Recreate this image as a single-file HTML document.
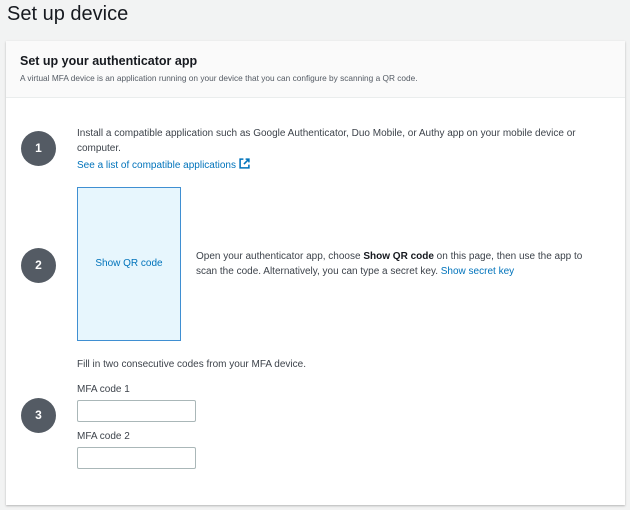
<!DOCTYPE html>
<html><head><meta charset="utf-8"><style>
*{margin:0;padding:0;box-sizing:border-box}
body{width:630px;height:510px;background:#f2f3f3;font-family:"Liberation Sans",sans-serif;color:#16191f;position:relative;overflow:hidden}
.abs{position:absolute}
h1{position:absolute;left:7px;top:3px;font-size:20px;font-weight:normal;color:#16191f}
.card{position:absolute;left:6px;top:41px;width:619px;height:464px;background:#fff;box-shadow:0 1px 2px rgba(0,0,0,.25)}
.hdr{position:absolute;left:0;top:0;width:100%;height:57px;background:#fafafa;border-bottom:1px solid #eaeded}
.t{font-size:10px;color:#3d434b;line-height:15px}
.circ{position:absolute;left:21px;width:35px;height:35px;border-radius:50%;background:#545b64;color:#fff;font-weight:bold;font-size:12px;text-align:center;line-height:35px}
a{color:#0073bb;text-decoration:none}
.inp{position:absolute;left:77px;width:119px;height:22px;border:1px solid #aab7b8;border-radius:2px;background:#fff}
</style></head><body>
<h1>Set up device</h1>
<div class="card">
<div class="hdr">
<div class="abs" style="left:14px;top:13px;font-size:12.5px;font-weight:bold;color:#16191f">Set up your authenticator app</div>
<div class="abs" style="left:14px;top:32px;font-size:8.3px;color:#545b64">A virtual MFA device is an application running on your device that you can configure by scanning a QR code.</div>
</div>
</div>
<div class="circ" style="top:131px">1</div>
<div class="abs t" style="left:77px;top:126px;width:510px">Install a compatible application such as Google Authenticator, Duo Mobile, or Authy app on your mobile device or computer.</div>
<div class="abs t" style="left:77px;top:158px"><a>See a list of compatible applications</a> <svg width="11" height="11" viewBox="0 0 10 10" style="vertical-align:-1px"><path d="M4 1H1v8h8V6" fill="none" stroke="#0073bb" stroke-width="1.4"/><path d="M6 1h3v3M9 1L4.5 5.5" fill="none" stroke="#0073bb" stroke-width="1.4"/></svg></div>
<div class="abs" style="left:77px;top:187px;width:104px;height:154px;background:#e7f6fd;border:1px solid #3f8fd2;text-align:center;line-height:152px;font-size:10px;color:#0073bb">Show QR code</div>
<div class="circ" style="top:248px">2</div>
<div class="abs t" style="left:196px;top:249px;width:410px">Open your authenticator app, choose <b style="color:#16191f">Show QR code</b> on this page, then use the app to scan the code. Alternatively, you can type a secret key. <a>Show secret key</a></div>
<div class="abs t" style="left:77px;top:357px">Fill in two consecutive codes from your MFA device.</div>
<div class="abs t" style="left:77px;top:382px">MFA code 1</div>
<div class="inp" style="top:400px"></div>
<div class="circ" style="top:398px">3</div>
<div class="abs t" style="left:77px;top:429px">MFA code 2</div>
<div class="inp" style="top:447px"></div>
</body></html>
